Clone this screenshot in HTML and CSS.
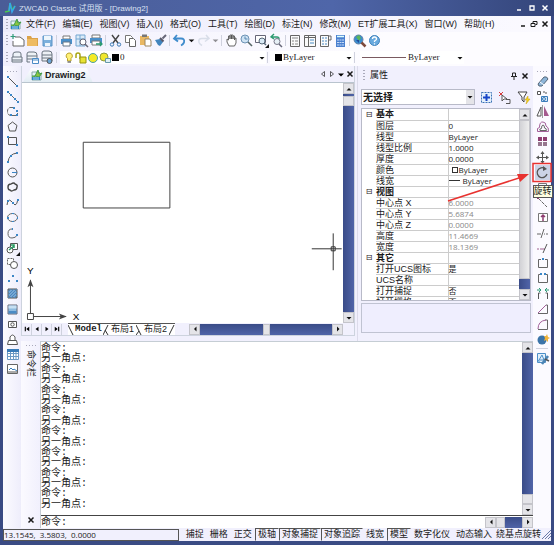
FILE: index.html
```html
<!DOCTYPE html>
<html lang="zh-CN">
<head>
<meta charset="utf-8">
<title>ZWCAD Classic</title>
<link rel="stylesheet" href="styles.css">
</head>
<body>
<svg class="defs" aria-hidden="true">
  <symbol id="down" viewBox="0 0 8 8"><path d="M1.5 3h5L4 5.5z" fill="#111"/></symbol>
  <symbol id="up" viewBox="0 0 8 8"><path d="M1.5 5.5h5L4 3z" fill="#111"/></symbol>
  <symbol id="left" viewBox="0 0 8 8"><path d="M5.5 1.5v5L3 4z" fill="#111"/></symbol>
  <symbol id="right" viewBox="0 0 8 8"><path d="M3 1.5v5L5.5 4z" fill="#111"/></symbol>
  <symbol id="close" viewBox="0 0 8 8"><path d="M1.5 1.5l5 5m0-5l-5 5" stroke="currentColor" stroke-width="1.5"/></symbol>
  <symbol id="dwg" viewBox="0 0 12 12"><path d="M1 3h7l2 2v6H1z" fill="#e6f2f8" stroke="#8aa"/><path d="M1 7h3l3-6 1 4 3-1-3 4-4-1-2 4" fill="#8cc63f" stroke="#3f9a48"/><path d="M1 8h8v3H1z" fill="#2b82c4"/><path d="M3 8v3m2-3v3m2-3v3" stroke="#dff" stroke-width=".7"/></symbol>
  <symbol id="printer" viewBox="0 0 15 15"><path d="M4 3h7v3H4z" fill="#fff" stroke="#777"/><path d="M2 6h11v5H2z" fill="#4a8fc9"/><path d="M4 9h7v4H4z" fill="#fff" stroke="#678"/></symbol>
  <symbol id="layers" viewBox="0 0 15 15"><path d="M3 7V4q0-2 3-2h3q2 0 2 2v3M2 7h10v3H2zM2 10v2h10v-2" fill="#eef3f8" stroke="#6b7480"/></symbol>
</svg>
<header class="title">
  <svg width="12" height="12" viewBox="0 0 12 12"><path d="M1 10l4-1 1-8 2 7 3-4" fill="none" stroke="#4cc552" stroke-width="1.6"/><path d="M5 9l1-8 2 9 3-6" fill="none" stroke="#35a7ea" stroke-width="1.5"/></svg>
  <h1>ZWCAD Classic 试用版 - [Drawing2]</h1>
  <div class="winbtns">
    <button aria-label="最小化"><svg viewBox="0 0 8 8"><path d="M2 6h4" stroke="currentColor" stroke-width="1.5"/></svg></button>
    <button aria-label="最大化"><svg viewBox="0 0 8 8"><path d="M2 2h4v4H2z" fill="none" stroke="currentColor" stroke-width="1.3"/></svg></button>
    <button aria-label="关闭"><svg><use href="#close"/></svg></button>
  </div>
</header>
<div class="frame">
  <nav class="menu">
    <i class="grip"></i><svg width="12" height="12"><use href="#dwg"/></svg>
    <div class="items"><button>文件(F)</button><button>编辑(E)</button><button>视图(V)</button><button>插入(I)</button><button>格式(O)</button><button>工具(T)</button><button>绘图(D)</button><button>标注(N)</button><button>修改(M)</button><button>ET扩展工具(X)</button><button>窗口(W)</button><button>帮助(H)</button></div>
    <div class="winbtns">
      <button aria-label="最小化"><svg viewBox="0 0 8 8"><path d="M2 6h4" stroke="currentColor" stroke-width="1.5"/></svg></button>
      <button aria-label="还原"><svg viewBox="0 0 8 8"><path d="M3 3V1.500h4v3H5.500M1 3.500h4v3H1z" fill="none" stroke="currentColor"/></svg></button>
      <button aria-label="关闭"><svg><use href="#close"/></svg></button>
    </div>
  </nav>

  <div class="bar standard">
    <i class="grip"></i>
    <button aria-label="新建"><svg viewBox="0 0 15 15"><path d="M5 4h5l4 3v6H3V8" fill="#fff" stroke="#666"/><path d="M3 1v5M.5 3.500h5" stroke="#2f9c78" stroke-width="1.2"/></svg></button>
    <button aria-label="打开"><svg viewBox="0 0 15 15"><path d="M2 3h4l1 2h6v8H2z" fill="#dba24a"/><path d="M2 6h10v7H2z" fill="#eebb62"/></svg></button>
    <button aria-label="保存"><svg viewBox="0 0 15 15"><path d="M3 3h9v10H3z" fill="#7cb0dc" stroke="#5a94c8"/><path d="M4 3h7v4H4zM5 10h5v3H5z" fill="#eef6fc"/></svg></button>
    <i class="sep"></i>
    <button aria-label="打印"><svg><use href="#printer"/></svg></button>
    <button aria-label="预览"><svg viewBox="0 0 15 15"><path d="M2 2h9v11H2zM2 6h9M6 2v11" fill="#dbebf8" stroke="#75a7d2"/><circle cx="9" cy="9" r="3" fill="#fff" stroke="#667"/><path d="M11 11l3 3" stroke="#667" stroke-width="1.500"/></svg></button>
    <button aria-label="发布"><svg viewBox="0 0 15 15"><path d="M3 2h8v3H3z" fill="#fff" stroke="#777"/><path d="M1 5h12v5H1z" fill="#4a8fc9"/><path d="M3 8h8v4H3z" fill="#fff" stroke="#777"/><path d="M7 11h6m-2-2l2 2-2 2" stroke="#2a9a70" fill="none" stroke-width="1.300"/></svg></button>
    <i class="sep"></i>
    <button aria-label="剪切"><svg viewBox="0 0 15 15"><path d="M4 2l6 8M11 2L5 10" stroke="#444" stroke-width="1.400"/><circle cx="4" cy="11.500" r="1.700" fill="none" stroke="#3a78b5"/><circle cx="11" cy="11.500" r="1.700" fill="none" stroke="#3a78b5"/></svg></button>
    <button aria-label="复制"><svg viewBox="0 0 15 15"><path d="M2.500 2.500h5l2 2v5h-7z" fill="#fff" stroke="#777"/><path d="M6.500 5.500h4l2 2v6h-6z" fill="#fff" stroke="#666"/></svg></button>
    <button aria-label="粘贴"><svg viewBox="0 0 15 15"><path d="M2 3h9v9H2z" fill="#e9b863"/><path d="M4 1.500h5V4H4z" fill="#777"/><path d="M7 6h5l1 2v5H7z" fill="#fff" stroke="#9a8560"/></svg></button>
    <button aria-label="格式刷"><svg viewBox="0 0 15 15"><path d="M13 2L9.500 5.500" stroke="#667" stroke-width="2"/><path d="M2 7l5-1 3 3-3 4-2-1z" fill="#4285bd"/><path d="M7 5l3.500 3.500" stroke="#556" stroke-width="2"/></svg></button>
    <i class="sep"></i>
    <button aria-label="放弃"><svg viewBox="0 0 15 15"><path d="M5 2L2 5.500 6 8.500M2 5.500h7q4 0 3 4-1 2-3 3" fill="none" stroke="#3f8ccc" stroke-width="1.800"/></svg></button>
    <button class="drop" aria-label="放弃列表"><svg><use href="#down"/></svg></button>
    <button class="off" aria-label="重做"><svg viewBox="0 0 15 15"><path d="M10 2l3 3.500-4 3M13 5.500H6q-4 0-3 4 1 2 3 3" fill="none" stroke="#b5c2d0" stroke-width="1.500"/></svg></button>
    <button class="drop off" aria-label="重做列表"><svg><use href="#down"/></svg></button>
    <i class="sep"></i>
    <button aria-label="平移"><svg viewBox="0 0 15 15"><path d="M5 13L3 9V6l1.500 1V3h1.500v3V2h1.500v4V2H9v4-3h1.500v4l.5-2h1v5l-1.500 3z" fill="#fff" stroke="#555" stroke-width=".9"/></svg></button>
    <button aria-label="实时缩放"><svg viewBox="0 0 15 15"><circle cx="6" cy="6" r="4" fill="#cfe3f3" stroke="#6d93b5"/><path d="M9 9l4 4" stroke="#566" stroke-width="1.600"/><path d="M6 3.500V6h2.500" fill="none" stroke="#5686b0"/></svg></button>
    <button aria-label="窗口缩放"><svg viewBox="0 0 15 15"><path d="M1.500 2.500h10v7h-10z" fill="#fff" stroke="#667"/><circle cx="8" cy="8" r="3" fill="#d9e9f5" stroke="#567"/><path d="M10 10l2 2" stroke="#567" stroke-width="1.500"/><path d="M15 11v4h-4z" fill="#111"/></svg></button>
    <button aria-label="缩放上一个"><svg viewBox="0 0 15 15"><path d="M5 1L2 4l3 2M2 4h6q2 0 2 2" fill="none" stroke="#2d9b70" stroke-width="1.400"/><circle cx="8" cy="8.500" r="3" fill="#e7f0f6" stroke="#778"/><path d="M10 11l3 3" stroke="#667" stroke-width="1.500"/></svg></button>
    <i class="sep"></i>
    <button aria-label="特性"><svg viewBox="0 0 15 15"><path d="M2.500 2.500h9v11h-9z" fill="#fafafa" stroke="#666"/><path d="M4 5h6M4 8h2m1 0h3M4 11h2m1 0h3" stroke="#888"/></svg></button>
    <button aria-label="设计中心"><svg viewBox="0 0 15 15"><path d="M1.500 2.500h11v11h-11zM5.500 3v10M1 4.500h12" fill="#fafafa" stroke="#666"/><path d="M7 7h4M7 10h4" stroke="#4b8ac4"/></svg></button>
    <button aria-label="工具选项板"><svg viewBox="0 0 15 15"><path d="M2.500 2.500h8v11h-8zM10 3h3v4h-2" fill="#fafafa" stroke="#666"/><path d="M4 5h5M4 8h5M4 11h5" stroke="#4b8ac4" stroke-dasharray="2 1"/></svg></button>
    <button aria-label="计算器"><svg viewBox="0 0 15 15"><path d="M3 2h9v12H3z" fill="#4b81cf"/><path d="M4 3.500h7" stroke="#dff" stroke-width="1.500"/><path d="M4 7h7M4 9.500h7M4 12h7" stroke="#c8dcf8" stroke-dasharray="2 .5"/></svg></button>
    <i class="sep"></i>
    <button aria-label="查找"><svg viewBox="0 0 15 15"><circle cx="6.500" cy="6.500" r="4.500" fill="#3a8ed0" stroke="#6582a5"/><path d="M4 4l3-2 2 3-2 3z" fill="#5cb65b"/><path d="M9.500 9.500l4 4" stroke="#7d4a3c" stroke-width="2.500"/><path d="M4 7h3v3z" fill="#224a9a"/></svg></button>
    <button aria-label="帮助"><svg viewBox="0 0 15 15"><circle cx="7.500" cy="7.500" r="5" fill="#6aaade" stroke="#3f82bd"/><path d="M5.500 6q0-2 2-2t2 2q0 1-2 2v1M7.500 10.200v1.200" fill="none" stroke="#fff" stroke-width="1.300"/></svg></button>
  </div>

  <div class="bar layerbar">
    <i class="grip"></i>
    <button aria-label="图层管理"><svg><use href="#layers"/></svg></button>
    <button aria-label="图层状态"><svg viewBox="0 0 15 15"><path d="M2 6V4q0-2 2-2h5q3 0 3 3v1M2 6h10v3H2zM2 9v3h3" fill="#edf1f5" stroke="#6b7480"/><path d="M7.500 8.500h6v5h-6zM7 10h6" fill="#fff" stroke="#4b8bc5"/></svg></button>
    <button aria-label="图层工具"><svg viewBox="0 0 15 15"><path d="M2 5V3q0-2 2-2h5q3 0 3 3v1M2 5h10v3H2zM2 8v3h10V8" fill="#edf1f5" stroke="#6b7480"/><circle cx="9.500" cy="11" r="2.500" fill="#6aa5d7" stroke="#555"/></svg></button>
    <i class="sep"></i>
    <label class="combo layer">
      <svg viewBox="0 0 12 12"><path d="M6 1a3 3 0 0 1 2 5.500V9H4.500V6.500A3 3 0 0 1 6 1z" fill="#fff176" stroke="#b9a12d"/><path d="M4.500 10h3.500" stroke="#777" stroke-width="1.500"/></svg>
      <svg viewBox="0 0 12 12"><path d="M1 6V3q0-2 2-2t2 2v4" fill="none" stroke="#a7a414" stroke-width="1.500"/><path d="M5 5h6v6H5z" fill="#e8e334" stroke="#95920e"/></svg>
      <svg viewBox="0 0 12 12"><circle cx="6" cy="6" r="4.500" fill="#f4ea25" stroke="#4b9fa8"/></svg>
      <svg viewBox="0 0 12 12"><circle cx="5" cy="5" r="4" fill="#f1e72c" stroke="#8e9b43"/><path d="M6.500 6.500h5v4h-5z" fill="#dff0f5" stroke="#69a"/></svg>
      <i class="swatch"></i>
      <select aria-label="图层"><option>0</option></select><svg class="arr"><use href="#down"/></svg>
    </label>
    <i class="sep"></i>
    <label class="combo color"><i class="swatch"></i><select aria-label="颜色"><option>ByLayer</option></select><svg class="arr"><use href="#down"/></svg></label>
    <i class="sep"></i>
    <label class="combo ltype"><i class="rule"></i><select aria-label="线型"><option>ByLayer</option></select><svg class="arr"><use href="#down"/></svg></label>
  </div>

  <div class="work">
    <aside class="side">
      <i class="hgrip"></i>
      <div class="group">
        <button aria-label="直线"><svg viewBox="0 0 15 15"><path d="M3 3l9 9" stroke="#555"/><path d="M2 2h2v2H2zM11 11h2v2h-2z" fill="#3b86c6"/></svg></button>
        <button aria-label="构造线"><svg viewBox="0 0 15 15"><path d="M2 2l11 11" stroke="#666"/><path d="M2 2h2v2H2zM5 5h2v2H5zM9 9h2v2H9zM12 12h2v2h-2z" fill="#3b86c6"/></svg></button>
        <button aria-label="多段线"><svg viewBox="0 0 15 15"><path d="M8 3.500H5Q2.500 4 2.500 7.500t3 4h7V9" fill="none" stroke="#666" stroke-dasharray="4 1"/><path d="M8 3h2v2H8zM11 6h2v2h-2zM5 10h2v2H5zM11 10h2v2h-2z" fill="#3b86c6"/></svg></button>
        <button aria-label="正多边形"><svg viewBox="0 0 15 15"><path d="M7.500 3L12 6.500 10.500 12h-6L3 6.500z" fill="none" stroke="#555"/></svg></button>
        <button aria-label="矩形"><svg viewBox="0 0 15 15"><path d="M3.500 3.500h8v7h-8z" fill="none" stroke="#555"/><path d="M2 2h2v2H2zM11 10h2v2h-2z" fill="#3b86c6"/></svg></button>
      </div>
      <div class="group">
        <button aria-label="圆弧"><svg viewBox="0 0 15 15"><path d="M3 12Q4 4 12 3" fill="none" stroke="#555"/><path d="M2 11h2v2H2zM5 5h2v2H5zM11 2h2v2h-2z" fill="#3b86c6"/></svg></button>
        <button aria-label="圆"><svg viewBox="0 0 15 15"><circle cx="7.500" cy="7.500" r="4.500" fill="none" stroke="#555"/><path d="M7 7.500h5" stroke="#3b86c6"/></svg></button>
        <button aria-label="云线"><svg viewBox="0 0 15 15"><path d="M3 7q0-3 3-3 3-2 4 0 3 1 2 3 0 3-3 3-3 2-4 0-2 0-2-3z" fill="none" stroke="#444" stroke-width="1.400"/></svg></button>
        <button aria-label="样条曲线"><svg viewBox="0 0 15 15"><path d="M2 10Q3 3 6 6t4 4q2 0 3-6" fill="none" stroke="#555"/><path d="M2 5h2v2H2zM7 7h2v2H7zM12 4h2v2h-2z" fill="#3b86c6"/></svg></button>
        <button aria-label="椭圆"><svg viewBox="0 0 15 15"><ellipse cx="7.500" cy="7.500" rx="5" ry="4" fill="none" stroke="#666"/><path d="M7 3h2v1H7zM2 7h2v2H2zM12 7h1v2h-1zM7 11h2v1H7z" fill="#3b86c6"/></svg></button>
      </div>
      <div class="group">
        <button aria-label="椭圆弧"><svg viewBox="0 0 15 15"><path d="M7 3Q3 3 3 7.500t4 4.500q4 0 5-3" fill="none" stroke="#666"/><path d="M7 2h1v2H7zM11 8h2v2h-2z" fill="#3b86c6"/></svg></button>
        <button aria-label="插入块"><svg viewBox="0 0 15 15"><path d="M5.500 2.500h7v6h-7z" fill="#fff" stroke="#555"/><circle cx="5" cy="9" r="3" fill="#fff" stroke="#555"/><path d="M4 9l5-4M6 4h3v3" fill="none" stroke="#269a62" stroke-width="1.500"/><path d="M15 11v4h-4z" fill="#111"/></svg></button>
        <button aria-label="创建块"><svg viewBox="0 0 15 15"><path d="M2.500 2.500h6v6h-6z" fill="#fff" stroke="#666" stroke-dasharray="2 1"/><circle cx="9" cy="9" r="3.500" fill="#fff" stroke="#555"/></svg></button>
        <button aria-label="点"><svg viewBox="0 0 15 15"><path d="M7 4h2v2H7zM3 9h2v2H3zM11 9h2v2h-2z" fill="#3b86c6"/></svg></button>
        <button aria-label="填充"><svg viewBox="0 0 15 15"><path d="M3 3h9v9H3z" fill="#76a8d4" stroke="#555"/><path d="M3 6l3-3M3 9l6-6M3 12l9-9M6 12l6-6M9 12l3-3" stroke="#4d87bd"/></svg></button>
      </div>
      <div class="group">
        <button aria-label="渐变"><svg viewBox="0 0 15 15"><path d="M3 3h9v9H3z" fill="#8ebbe0" stroke="#667"/><path d="M3.500 3.500h8v3h-8z" fill="#c6dff2"/><path d="M3.500 9h8v2.500h-8z" fill="#4b8bc5"/></svg></button>
        <button aria-label="区域"><svg viewBox="0 0 15 15"><path d="M3.500 4.500h8v6h-8z" fill="#fff" stroke="#555"/><circle cx="7.500" cy="7.500" r="1.700" fill="none" stroke="#555"/></svg></button>
        <button aria-label="面域"><svg viewBox="0 0 15 15"><path d="M5 8V5q2.500-4 5 0v3M3.500 8.500h8l1 4h-10z" fill="#fff" stroke="#555"/></svg></button>
        <button aria-label="表格"><svg viewBox="0 0 15 15"><path d="M2.500 3.500h11v9h-11zM2 6.500h11M2 9.500h11M5.500 4v8M8.500 4v8M11 4v8" fill="#fff" stroke="#6c99c4"/><path d="M2 2h12v3H2z" fill="#397bb8"/></svg></button>
        <button aria-label="光栅图像"><svg viewBox="0 0 15 15"><path d="M2.500 2.500h10v9h-10z" fill="#fff" stroke="#666"/><path d="M4 8l2-2 2 2 1-1 3 2" fill="none" stroke="#3b7dbb"/><path d="M3 10h9" stroke="#555"/></svg></button>
      </div>
    </aside>

    <main class="center">
      <div class="upper">
        <section class="drawing">
          <div class="doctabs">
            <button class="doctab"><svg width="12" height="12"><use href="#dwg"/></svg>Drawing2</button>
            <div class="tabctl">
              <button aria-label="上一个"><svg viewBox="0 0 8 8"><path d="M5.500 1.500v5L2.500 4z" fill="none" stroke="#333" stroke-width=".8"/></svg></button>
              <button aria-label="下一个"><svg viewBox="0 0 8 8"><path d="M2.500 1.500v5L5.500 4z" fill="none" stroke="#333" stroke-width=".8"/></svg></button>
              <button aria-label="列表"><svg viewBox="0 0 8 8"><path d="M1 3.500h6L4 6.500z"/></svg></button>
              <button aria-label="关闭"><svg><use href="#close"/></svg></button>
            </div>
          </div>
          <div class="canvasrow">
            <svg class="canvas" viewBox="0 0 321 241" preserveAspectRatio="xMinYMin meet">
              <path d="M61.500 59.500h87v66h-87z" fill="none" stroke="#444"/>
              <path d="M291 166.500h30M312.500 151v37" stroke="#333"/><path d="M310.500 164.500h4v4h-4z" fill="none" stroke="#333"/>
              <path d="M5.500 231.500h6v6h-6zM8.500 231v-33M12 234.500h32" fill="none" stroke="#444"/>
              <path d="M8.500 197l-3 8 3-2 3 2zM45 234.500l-8-3 2 3-2 3z" fill="#444"/>
              <text x="5" y="192">Y</text><text x="51" y="238">X</text>
            </svg>
            <div class="vs"><button aria-label="上"><svg><use href="#up"/></svg></button><i class="start"></i><b></b><i></i><button aria-label="下"><svg><use href="#down"/></svg></button></div>
          </div>
          <div class="layouts">
            <div class="nav">
              <button aria-label="首个"><svg viewBox="0 0 8 8"><path d="M7 1v6L3 4zM1 1h1.500v6H1z"/></svg></button><button aria-label="前一个"><svg viewBox="0 0 8 8"><path d="M6 1v6L2 4z"/></svg></button><button aria-label="后一个"><svg viewBox="0 0 8 8"><path d="M2 1v6l4-3z"/></svg></button><button aria-label="末个"><svg viewBox="0 0 8 8"><path d="M1 1v6l4-3zM5.500 1H7v6H5.500z"/></svg></button>
            </div>
            <div class="ltabs">
              <svg viewBox="0 0 6 10"><path d="M0 0l5 10"/></svg><button class="model">Model</button><svg viewBox="0 0 6 10"><path d="M5 0L0 10M2 5l3 5"/></svg><button>布局1</button><svg viewBox="0 0 6 10"><path d="M0 0l5 10M3 6L0 10"/></svg><button>布局2</button><svg viewBox="0 0 6 10"><path d="M5 0L0 10"/></svg>
            </div>
            <div class="hs"><button aria-label="左"><svg><use href="#left"/></svg></button><i></i><b></b><i></i><button aria-label="右"><svg><use href="#right"/></svg></button></div>
            <i class="corner"></i>
          </div>
        </section>

        <section class="props">
          <div class="phead"><i class="grip"></i><h2>属性</h2><button aria-label="固定"><svg viewBox="0 0 8 8"><path d="M2.500 1h3v3.500h-3zM1 4.500h6M4 5v3" fill="none" stroke="#222"/></svg></button><button aria-label="关闭"><svg><use href="#close"/></svg></button></div>
          <div class="pick">
            <label class="combo"><select aria-label="选择"><option>无选择</option></select><svg class="arr"><use href="#down"/></svg></label>
            <button aria-label="添加选择"><svg viewBox="0 0 15 15"><path d="M2.500 2.500h10v10h-10z" fill="#e4f0fb" stroke="#3a72b5" stroke-dasharray="2 1"/><path d="M7.500 4v7M4 7.500h7" stroke="#1746c8" stroke-width="2"/></svg></button>
            <button aria-label="选择对象"><svg viewBox="0 0 15 15"><path d="M2 2l4 4M6 2L2 6" stroke="#d33a3a"/><path d="M5 5v6l2-2h3z" fill="#fff" stroke="#555"/><path d="M9 9.500h4v4H9" fill="none" stroke="#555"/></svg></button>
            <button aria-label="快速选择"><svg viewBox="0 0 15 15"><path d="M2 2h9L8 7v5l-2-2V7z" fill="#fff" stroke="#444"/><path d="M12 6l-3 4h2l-1 4 4-5h-2z" fill="#f5d11a" stroke="#c9a20c" stroke-width=".5"/></svg></button>
          </div>
          <div class="grid">
            <div class="scroller">
            <table>
              <colgroup><col class="c1"><col class="c2"><col></colgroup>
              <tr class="cat"><td>⊟</td><th>基本</th><td></td></tr>
              <tr><td></td><th>图层</th><td>0</td></tr>
              <tr><td></td><th>线型</th><td>ByLayer</td></tr>
              <tr><td></td><th>线型比例</th><td>1.0000</td></tr>
              <tr><td></td><th>厚度</th><td>0.0000</td></tr>
              <tr><td></td><th>颜色</th><td><i class="box"></i>ByLayer</td></tr>
              <tr><td></td><th>线宽</th><td><i class="dash"></i>ByLayer</td></tr>
              <tr class="cat"><td>⊟</td><th>视图</th><td></td></tr>
              <tr class="ro"><td></td><th>中心点 X</th><td>6.0000</td></tr>
              <tr class="ro"><td></td><th>中心点 Y</th><td>5.6874</td></tr>
              <tr class="ro"><td></td><th>中心点 Z</th><td>0.0000</td></tr>
              <tr class="ro"><td></td><th>高度</th><td>11.4669</td></tr>
              <tr class="ro"><td></td><th>宽度</th><td>18.1369</td></tr>
              <tr class="cat"><td>⊟</td><th>其它</th><td></td></tr>
              <tr><td></td><th>打开UCS图标</th><td>是</td></tr>
              <tr><td></td><th>UCS名称</th><td></td></tr>
              <tr><td></td><th>打开捕捉</th><td>否</td></tr>
              <tr><td></td><th>打开栅格</th><td>否</td></tr>
            </table>
            </div>
            <div class="vs"><button aria-label="上"><svg><use href="#up"/></svg></button><b class="long"></b><i class="end"></i><button aria-label="下"><svg><use href="#down"/></svg></button></div>
          </div>
          <div class="desc"></div>
        </section>
      </div>

      <section class="cmd">
        <div class="cmdhead"><i class="hgrip"></i><h2>命令栏</h2><button aria-label="关闭"><svg><use href="#close"/></svg></button></div>
        <div class="cmdbody">
          <div class="log">
            <ul><li>命令:</li><li>另一角点:</li><li>命令:</li><li>另一角点:</li><li>命令:</li><li>另一角点:</li><li>命令:</li><li>另一角点:</li><li>命令:</li><li>另一角点:</li><li>命令:</li><li>另一角点:</li><li>命令:</li><li>另一角点:</li><li>命令:</li><li>另一角点:</li></ul>
            <div class="vs"><button aria-label="上"><svg><use href="#up"/></svg></button><i></i><b></b><button aria-label="下"><svg><use href="#down"/></svg></button></div>
          </div>
          <div class="entry"><label for="cmd">命令:</label><input id="cmd" type="text"><div class="hs"><button aria-label="左"><svg><use href="#left"/></svg></button><b></b><i></i><button aria-label="右"><svg><use href="#right"/></svg></button></div></div>
        </div>
      </section>
    </main>

    <aside class="side modify">
      <i class="hgrip"></i>
      <div class="group">
        <button aria-label="删除"><svg viewBox="0 0 15 15"><path d="M3 10l6-7q3-1 4 2l-6 7q-4 1-4-2z" fill="#8db5d8" stroke="#567"/><path d="M5 8l4 3" stroke="#fff"/></svg></button>
        <button aria-label="复制对象"><svg viewBox="0 0 15 15"><path d="M2.500 2.500h3v3h-3z" fill="#fff" stroke="#555"/><path d="M8 3h3v3" fill="none" stroke="#555" stroke-dasharray="2 1"/><path d="M6.500 7.500h6v5h-6z" fill="#d4e7f8" stroke="#3b7dbb"/><circle cx="9" cy="10" r="1.500" fill="none" stroke="#3b7dbb"/></svg></button>
        <button aria-label="镜像"><svg viewBox="0 0 15 15"><path d="M6 3v9H2z" fill="#fff" stroke="#555"/><path d="M9 2v10h5z" fill="#a55a8f"/><path d="M7.500 1v13" stroke="#777" stroke-width=".7"/></svg></button>
        <button aria-label="偏移"><svg viewBox="0 0 15 15"><path d="M2.500 12.500q-1-4 2-4 0-6 3.500-5.500 3 0 3 4 3 1 2.500 5.500z" fill="none" stroke="#a3609a"/><path d="M5 11.500q-1-2 1.500-2Q6.500 6 8 6t1.500 3q2 0 2 2.500z" fill="none" stroke="#666"/></svg></button>
        <button aria-label="阵列"><svg viewBox="0 0 15 15"><path d="M3 3h4v4H3zM8 3h4v4H8z" fill="#8f3e72"/><path d="M3 8h4v4H3zM8 8h4v4H8z" fill="#96768e"/></svg></button>
      </div>
      <div class="group">
        <button aria-label="移动"><svg viewBox="0 0 15 15"><path d="M7.500 3v9M3 7.500h9" stroke="#555"/><path d="M7.500 1l2 3h-4zM7.500 14l2-3h-4zM1 7.500l3-2v4zM14 7.500l-3-2v4z" fill="#555"/></svg></button>
        <button class="active" aria-label="旋转"><svg viewBox="0 0 15 15"><path d="M10 3.500A5 5 0 1 0 12 9" fill="none" stroke="#555" stroke-width="1.300"/><path d="M8 1l4 3-4 2z" fill="#555"/></svg><span class="tip">旋转</span></button>
        <button aria-label="缩放"><svg viewBox="0 0 15 15"><path d="M3.500 3.500h8v8h-8z" fill="none" stroke="#777"/></svg></button>
        <button aria-label="拉伸"><svg viewBox="0 0 15 15"><path d="M3 3l9 9" stroke="#666" stroke-dasharray="4 1"/><path d="M2 2h2v2H2z" fill="#8f3e72"/></svg></button>
        <button aria-label="拉长"><svg viewBox="0 0 15 15"><path d="M3.500 3.500h9v8h-9z" fill="#fff" stroke="#777"/><path d="M8 11V6M6 7l2-2 2 2" fill="none" stroke="#8f3e72" stroke-width="1.500"/></svg></button>
      </div>
      <div class="group">
        <button aria-label="修剪"><svg viewBox="0 0 15 15"><path d="M2 8h4m3 0h1m1 0h2M6 12l3-9" stroke="#666"/></svg></button>
        <button aria-label="延伸"><svg viewBox="0 0 15 15"><path d="M2 8h2m1 0h5" stroke="#a06090"/><path d="M8 12l4-9" stroke="#555"/></svg></button>
        <button aria-label="打断于点"><svg viewBox="0 0 15 15"><path d="M6 3.500H3.500v8h9v-8H10" fill="none" stroke="#666"/><path d="M7 2h2v2H7z" fill="#3b86c6"/></svg></button>
        <button aria-label="打断"><svg viewBox="0 0 15 15"><path d="M5 3.500H3.500v8h9v-8H11" fill="none" stroke="#666"/><path d="M5 2h2v2H5zM9 2h2v2H9z" fill="#3b86c6"/></svg></button>
        <button aria-label="合并"><svg viewBox="0 0 15 15"><path d="M3.500 13V7h2M12.500 13V7h-2" fill="none" stroke="#555"/><path d="M2 4h4M4 2l2 2-2 2M14 4h-4m2-2l-2 2 2 2" fill="none" stroke="#2b9b77"/></svg></button>
      </div>
      <div class="group">
        <button aria-label="倒角"><svg viewBox="0 0 15 15"><path d="M3 11.500h9.500V3H11" fill="none" stroke="#666"/><path d="M3 11l8-8" stroke="#a3609a"/></svg></button>
        <button aria-label="圆角"><svg viewBox="0 0 15 15"><path d="M3 12.500h9.500V3H10" fill="none" stroke="#666"/><path d="M3 12q0-8 8-9" fill="none" stroke="#a3609a"/></svg></button>
        <button aria-label="分解"><svg viewBox="0 0 15 15"><circle cx="7" cy="8" r="4.500" fill="#3b74a8"/><path d="M12 2l1 3 2 1-2 1v3l-2-2-2 1 1-3-1-2h2z" fill="#f0b33a"/></svg></button>
      </div>
      <i class="hsep"></i>
      <button aria-label="块编辑"><svg viewBox="0 0 15 15"><path d="M2.500 2.500h8v9h-8z" fill="#e2effa" stroke="#4c8fc9"/><path d="M4 9l3-5 2 5zM5 12l-2-3" fill="none" stroke="#4c8fc9"/><path d="M13 5L7 13" stroke="#4b84b4" stroke-width="2.500"/><path d="M10 8l4 2" stroke="#555" stroke-width="1.500"/></svg></button>
    </aside>
  </div>

  <footer class="status">
    <output>13.1545,  3.5803,  0.0000</output>
    <button>捕捉</button><button>栅格</button><button>正交</button><button class="on">极轴</button><button class="on">对象捕捉</button><button class="on">对象追踪</button><button>线宽</button><button class="on">模型</button><button>数字化仪</button><button>动态输入</button><button>绕基点旋转</button>
    <svg class="sizer" viewBox="0 0 9 9"><path d="M0 9l9-9M3 9l6-6M6 9l3-3" stroke="#6a7aa8"/></svg>
  </footer>
</div>
<svg class="callout" viewBox="0 0 107 42"><path d="M2 39L76 15" stroke="#e8322f" stroke-width="1.500"/><path d="M83 12l-12 0 3 8z" fill="#e8322f"/><path d="M87 1.500h18v18H87z" fill="none" stroke="#e8322f" stroke-width="1.500"/></svg>
</body>
</html>
```
FILE: styles.css
```css
* { box-sizing: border-box; }
html, body { height: 100%; }
body {
  margin: 0; padding: 0 3px 4px; display: flex; flex-direction: column; position: relative; overflow: hidden;
  background: #3a4b84; color: #1a1a1a;
  font: 9px/11px "Liberation Sans", "Noto Sans CJK SC", sans-serif;
}
.defs { position: absolute; width: 0; height: 0; }
button, select, input { font: inherit; color: inherit; border: 0; background: none; padding: 0; margin: 0; border-radius: 0; }
button { display: flex; align-items: center; justify-content: center; flex: none; white-space: nowrap; }
svg { flex: none; display: block; }
h1, h2, ul { margin: 0; padding: 0; font: inherit; list-style: none; }
select { appearance: none; flex: 1; min-width: 0; outline: 0; }

.title { height: 16px; flex: none; display: flex; align-items: center; gap: 3px; color: #d9e0f2; background: linear-gradient(90deg, #4a5d97, #4f66a9 60%, #34457a); margin: 0 -3px; padding: 0 5px 0 4px; }
.title h1 { flex: 1; font-size: 8px; }
.winbtns { display: flex; gap: 5px; }
.winbtns svg, .tabctl svg, .phead svg, .cmdhead svg { width: 8px; height: 8px; }
.title .winbtns { color: #fff; }

.frame { flex: 1; min-height: 0; display: flex; flex-direction: column; background: #f7f6ff; }
.grip { width: 2px; height: 11px; flex: none; margin-left: 3px; background: repeating-linear-gradient(#aab 0 1px, transparent 1px 3px); }
.hgrip { width: 10px; height: 1px; flex: none; background: repeating-linear-gradient(90deg, #aab 0 1px, transparent 1px 3px); }
.menu { height: 16px; display: flex; align-items: center; flex: none; background: linear-gradient(90deg, #ecebfb, #fbfaff); }
.menu > svg { margin: 0 4px 0 2px; }
.items { display: flex; gap: 7px; flex: 1; }
.menu .winbtns { gap: 3px; padding-right: 2px; }
.bar { height: 17px; display: flex; align-items: center; flex: none; background: linear-gradient(90deg, #f1f0fd, #fdfcff 70%); }
.bar .grip { margin-right: 2px; }
.bar > button, .bar > button svg, .side button, .side button svg, .pick button, .pick button svg { width: 15px; height: 15px; }
.bar > .drop, .bar > .drop svg { width: 9px; }
.off { opacity: .45; }
.sep { width: 1px; height: 11px; background: #d0d2de; margin: 0 2px 0 1px; flex: none; }
.combo { display: flex; align-items: center; background: #fff; }
.combo .arr { width: 8px; height: 8px; }
.bar .combo { height: 13px; font-family: "Liberation Serif", serif; }
.layer { width: 206px; padding-left: 3px; margin-left: 1px; }
.layer > svg:not(.arr) { width: 12px; height: 12px; }
.swatch { width: 7px; height: 7px; background: #000; margin: 0 1px; }
.color { width: 83px; padding-left: 4px; }
.ltype { width: 104px; margin-left: 3px; }
.rule { width: 44px; height: 1px; background: #7a5a60; margin: 0 2px; }

.work { flex: 1; min-height: 0; display: flex; background: #f1f0fd; }
.side { width: 18px; flex: none; display: flex; flex-direction: column; align-items: center; padding-top: 5px; gap: 1px; background: linear-gradient(90deg, #fcfbff, #eeedfb); }
.side .hgrip { margin-bottom: 1px; }
.modify { position: relative; background: #fbfaff; }
.center { flex: 1; min-width: 0; display: flex; flex-direction: column; }
.upper { flex: 1; min-height: 0; display: flex; gap: 2px; }
.drawing { flex: 1; min-width: 0; display: flex; flex-direction: column; border: solid #cdd3de; border-width: 0 1px 1px; margin-bottom: 5px; }
.doctabs { height: 17px; flex: none; display: flex; align-items: flex-end; justify-content: space-between; border-bottom: 1px solid #b9c4ce; background: #f1f0fd; }
.doctab { height: 14px; gap: 2px; padding: 0 7px 0 8px; margin-left: 1px; font-weight: bold; background: linear-gradient(#fdfdff, #e2ecf3); clip-path: polygon(8px 0, 92% 0, 100% 100%, 0 100%); }
.tabctl { display: flex; gap: 1px; padding-bottom: 4px; }
.canvasrow { flex: 1; min-height: 0; display: flex; background: #fff; }
.canvas { flex: 1; min-width: 0; height: 100%; font-size: 10px; }

.vs { width: 11px; flex: none; display: flex; flex-direction: column; }
.hs { height: 11px; display: flex; }
.vs svg, .hs svg { width: 8px; height: 8px; }
.vs button { height: 11px; }
.hs button { width: 11px; }
.vs button, .hs button, .vs b, .hs b { background: #e4e4e8; border: 1px solid #c4c4ca; flex: none; }
.vs b { height: 10px; }
.hs b { width: 7px; }
.vs i { flex: 1; background: linear-gradient(90deg, #3a4c88, #5064a8); }
.vs .start { flex: none; height: 2px; }
.hs i { flex: 1; background: linear-gradient(#3a4c88, #5064a8); }
.vs .long { flex: 1; height: auto; background: linear-gradient(90deg, #d2d2d6, #eee); }
.vs .end { flex: none; height: 10px; }

.layouts { display: flex; align-items: center; height: 12px; flex: none; }
.nav { display: flex; }
.nav button { width: 10px; height: 11px; border-right: 1px solid #cfd2de; }
.nav svg { width: 6px; height: 6px; }
.ltabs { display: flex; align-items: center; border-top: 1px solid #555; margin-left: 6px; height: 12px; background: #fff; }
.ltabs button { padding: 0 2px; }
.ltabs svg { width: 6px; height: 10px; fill: none; stroke: #333; }
.ltabs .model { font-family: "Liberation Mono", monospace; font-weight: bold; padding: 0 1px; }
.layouts .hs { flex: 1; margin-left: 14px; }
.corner { width: 11px; }

.props { width: 176px; flex: none; display: flex; flex-direction: column; padding: 2px 2px 8px 3px; border-left: 1px solid #dcdbea; }
.phead { height: 15px; flex: none; display: flex; align-items: center; gap: 3px; margin-bottom: 6px; padding-right: 2px; }
.phead h2 { flex: 1; margin-left: 2px; }
.phead .grip { margin-left: 2px; }
.pick { display: flex; align-items: center; justify-content: space-between; height: 16px; flex: none; margin-bottom: 3px; }
.pick .combo { width: 114px; height: 16px; border: 1px solid #b8bac8; font-size: 10px; font-weight: bold; padding-left: 1px; }
.pick .arr { background: #e4e4e8; height: 14px; }
.grid { flex: 1; min-height: 0; display: flex; border: 1px solid #b8bac8; background: #fff; }
.scroller { flex: 1; overflow: hidden; }
table { width: 100%; table-layout: fixed; border-collapse: collapse; line-height: 10px; }
.c1 { width: 14px; }
.c2 { width: 72px; }
td, th { height: 11px; padding: 0; text-align: left; font-weight: normal; white-space: nowrap; border-bottom: 1px solid #ccc; }
td { border-left: 1px solid #ccc; font-size: 8px; font-family: "Open Sans", "Noto Sans CJK SC", sans-serif; }
td:first-child { border: 0; text-align: center; font-family: "DejaVu Sans", sans-serif; }
.cat th { font-weight: bold; }
.ro td { color: #888; }
.box { display: inline-block; width: 6px; height: 6px; border: 1px solid #333; margin: 0 1px 0 3px; }
.dash { display: inline-block; width: 11px; height: 1px; background: #333; margin: 0 3px 3px 0; }
.desc { height: 30px; flex: none; margin-top: 2px; border: 1px solid #c0c3d2; background: #efeefe; }

.cmd { height: 187px; flex: none; display: flex; }
.cmdhead { width: 19px; flex: none; display: flex; flex-direction: column; align-items: center; padding: 4px 0; background: linear-gradient(90deg, #fbfaff, #f1f0fd); }
.cmdhead h2 { writing-mode: vertical-rl; text-orientation: sideways; margin-top: 4px; flex: 1; }
.cmdbody { flex: 1; min-width: 0; display: flex; flex-direction: column; background: #fff; border: 1px solid #c5cdd4; border-width: 1px 0 0 1px; font: 10px/11px "Liberation Mono", "Noto Sans CJK SC", monospace; }
.log { flex: 1; min-height: 0; display: flex; border-bottom: 1px solid #444; }
.log ul { flex: 1; display: flex; flex-direction: column; justify-content: space-between; padding: 1px 0 6px; }
.log li { height: 10px; }
.entry { display: flex; align-items: center; height: 12px; }
.entry input { flex: 1; min-width: 0; outline: 0; }
.entry .hs { width: 48px; }
.entry .hs b { width: 9px; }

.side .active { background: #ccd3e6; position: relative; }
.tip { position: absolute; left: -2px; top: 20px; z-index: 2; background: #ffffe1; border: 1px solid #555; line-height: 11px; }
.hsep { width: 12px; height: 1px; background: #d0d2de; margin: 0 0 1px; }

.status { height: 13px; flex: none; display: flex; align-items: center; background: #f1f0fd; }
.status output { flex: 1; height: 12px; border: 1px solid #555; margin-right: 4px; white-space: pre; font: 8px/10px "Open Sans", sans-serif; }
.status button { height: 13px; padding: 0 2px; border: 1px solid transparent; }
.status button:last-of-type { padding: 0; }
.status .on { border-color: #555 transparent transparent #555; }
.sizer { width: 9px; height: 9px; }
.callout { position: absolute; right: 1px; top: 162px; width: 107px; height: 42px; pointer-events: none; }
```
